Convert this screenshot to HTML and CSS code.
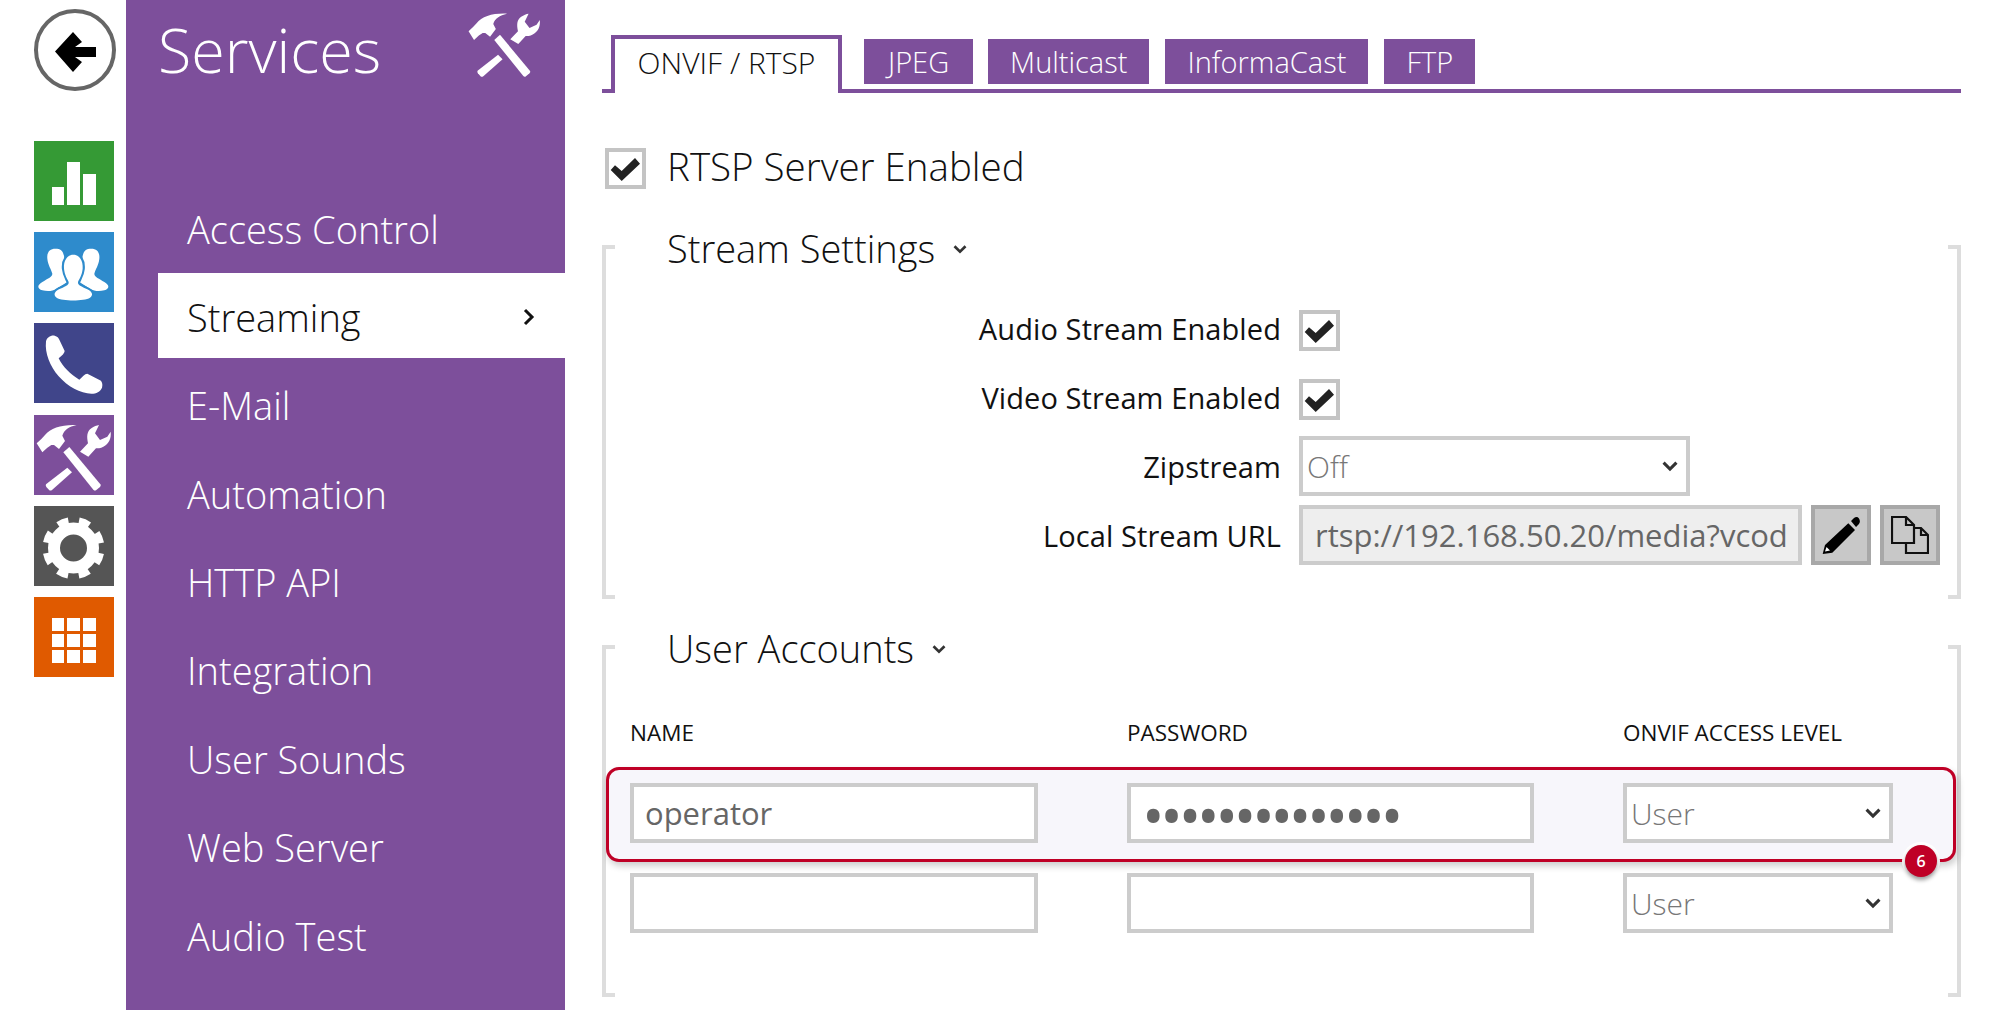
FILE: index.html
```html
<!DOCTYPE html>
<html lang="en">

<head>
    <meta charset="UTF-8">
    <title>Services - Streaming</title>
    <link rel="stylesheet" href="styles.css">
</head>

<body>
    <svg class="defs" width="0" height="0">
        <symbol id="tools" viewBox="0 0 240 240">
            <path d="M8 85 L22 72 L33 60 C50 38 85 28 128 30 C105 35 90 45 85 62 L93 78 L75 102 L60 90 L52 90 L40 98 L25 112 Z" />
            <path d="M88 112 L106 96 L199 208 Q202 212 198 216 L186 226 Q182 228 178 224 Z" />
            <path d="M100 158 L36 208 Q34 212 37 216 L46 226 Q50 228 54 225 L114 172 Z" />
            <path d="M138 110 L162 85 C158 65 158 50 172 40 C180 34 188 31 195 30 L183 55 L198 75 L220 65 L230 50 C232 70 226 85 208 95 C200 100 190 100 186 100 L163 125 Z" />
        </symbol>
    </svg>

    <nav class="rail">
        <div class="back">
            <svg viewBox="0 0 74 74" width="74" height="74">
                <path d="M17 38.5 L35 19 L44 29 L37 34 L58 34 L58 44 L37 44 L44 49 L35 59 Z" />
            </svg>
        </div>
        <div class="tile tile-green">
            <svg viewBox="0 0 80 80"><path d="M18 46h12v18H18z M33 21h13v43H33z M49 33h13v31H49z" /></svg>
        </div>
        <div class="tile tile-blue">
            <svg viewBox="0 0 240 240">
                <path d="M64 50 C48 50 38 60 40 80 C42 100 52 112 55 125 C55 135 40 140 25 150 C8 160 10 170 25 175 C40 178 55 178 68 170 L100 150 L92 100 C92 60 85 50 64 50 Z" />
                <path d="M172 50 C188 50 198 60 196 80 C194 100 184 112 181 125 C181 135 196 140 211 150 C228 160 226 170 211 175 C196 178 181 178 168 170 L136 150 L144 100 C144 60 151 50 172 50 Z" />
                <path class="person-front" d="M118 68 C100 68 88 85 90 110 C92 130 100 140 104 150 C106 160 90 165 75 172 C60 180 58 190 68 197 C85 208 150 208 168 197 C178 190 176 180 160 172 C146 165 130 160 132 150 C136 140 144 130 146 110 C148 85 136 68 118 68 Z" />
            </svg>
        </div>
        <div class="tile tile-navy">
            <svg viewBox="0 0 240 240">
                <path d="M36 55 C38 45 50 36 62 38 C70 40 74 44 76 50 L92 84 C92 90 84 98 74 106 C85 130 110 155 136 170 C145 162 152 152 160 152 L198 172 C206 176 206 188 204 194 C198 206 188 212 172 212 C140 212 100 190 74 160 C48 130 32 92 36 55 Z" />
            </svg>
        </div>
        <div class="tile tile-purple">
            <svg><use href="#tools" /></svg>
        </div>
        <div class="tile tile-gray">
            <svg viewBox="0 0 80 80">
                <circle class="gear-ring" cx="39.5" cy="42" r="19.5" />
                <circle class="gear-teeth" cx="39.5" cy="42" r="27.5" />
            </svg>
        </div>
        <div class="tile tile-orange">
            <svg viewBox="0 0 80 80">
                <path d="M18 21h12v13H18z M33 21h13v13H33z M49 21h13v13H49z M18 37h12v13H18z M33 37h13v13H33z M49 37h13v13H49z M18 53h12v13H18z M33 53h13v13H33z M49 53h13v13H49z" />
            </svg>
        </div>
    </nav>

    <aside class="sidebar">
        <div class="sidebar-head">
            <h1>Services</h1>
            <svg class="head-icon"><use href="#tools" /></svg>
        </div>
        <ul class="menu">
            <li>Access Control</li>
            <li class="active">Streaming
                <svg class="menu-arrow" viewBox="0 0 12 18" width="12" height="18"><path d="M2 2 L9 9 L2 16" /></svg>
            </li>
            <li>E-Mail</li>
            <li>Automation</li>
            <li>HTTP API</li>
            <li>Integration</li>
            <li>User Sounds</li>
            <li>Web Server</li>
            <li>Audio Test</li>
        </ul>
    </aside>

    <main class="content">
        <div class="tabs">
            <div class="tab active">ONVIF / RTSP</div>
            <div class="tab tab-jpeg">JPEG</div>
            <div class="tab">Multicast</div>
            <div class="tab">InformaCast</div>
            <div class="tab">FTP</div>
        </div>

        <div class="server-row">
            <span class="check">
                <svg viewBox="0 0 33 33"><path d="M1.7 18 L6 13.3 L12.7 19 L26 6 L31 11.7 L12.7 29 Z" /></svg>
            </span>
            <span class="server-label">RTSP Server Enabled</span>
        </div>

        <section class="group group-stream">
            <h2>Stream Settings
                <svg class="title-arrow" viewBox="0 0 14 10" width="16" height="11"><path d="M2 2 L7 7 L12 2" /></svg>
            </h2>
            <div class="fields">
                <div class="field field-check">
                    <label>Audio Stream Enabled</label>
                    <span class="check">
                        <svg viewBox="0 0 33 33"><path d="M1.7 18 L6 13.3 L12.7 19 L26 6 L31 11.7 L12.7 29 Z" /></svg>
                    </span>
                </div>
                <div class="field field-check">
                    <label>Video Stream Enabled</label>
                    <span class="check">
                        <svg viewBox="0 0 33 33"><path d="M1.7 18 L6 13.3 L12.7 19 L26 6 L31 11.7 L12.7 29 Z" /></svg>
                    </span>
                </div>
                <div class="field field-select">
                    <label>Zipstream</label>
                    <div class="select select-zip">
                        <span>Off</span>
                        <svg viewBox="0 0 14 10" width="18" height="13"><path d="M2 2 L7 7 L12 2" /></svg>
                    </div>
                </div>
                <div class="field field-url">
                    <label>Local Stream URL</label>
                    <div class="url-wrap">
                        <input class="text-input url-input" type="text" value="rtsp://192.168.50.20/media?vcodec=h264" disabled>
                        <button class="icon-btn">
                            <svg viewBox="0 0 38 38" width="38" height="38">
                                <path d="M0.7 38 L3 29 L26.3 7.3 L33 14 L10.3 36.7 Z M29 5 L32 2 Q35 0 37 2.5 Q39 6 36.5 8.5 L34 11 Z" />
                                <path class="pencil-tip" d="M3 35.5 L4.5 31 L8 34.5 Z" />
                            </svg>
                        </button>
                        <button class="icon-btn">
                            <svg viewBox="0 0 38 38" width="38" height="38">
                                <path class="copy-page" d="M15 12 H30 L37 19 V37 H15 Z M30 12 V19 H37" />
                                <path class="copy-page copy-front" d="M1 1 H15 L23 9 V27 H1 Z M15 1 V9 H23" />
                            </svg>
                        </button>
                    </div>
                </div>
            </div>
        </section>

        <section class="group group-users">
            <h2>User Accounts
                <svg class="title-arrow" viewBox="0 0 14 10" width="16" height="11"><path d="M2 2 L7 7 L12 2" /></svg>
            </h2>
            <div class="account-row account-head">
                <span>NAME</span>
                <span>PASSWORD</span>
                <span>ONVIF ACCESS LEVEL</span>
            </div>
            <div class="account-row account-marked">
                <input class="text-input" type="text" value="operator">
                <input class="text-input password" type="password" value="12345678901234">
                <div class="select">
                    <span>User</span>
                    <svg viewBox="0 0 14 10" width="18" height="13"><path d="M2 2 L7 7 L12 2" /></svg>
                </div>
                <span class="badge">6</span>
            </div>
            <div class="account-row account-empty">
                <input class="text-input" type="text">
                <input class="text-input" type="password">
                <div class="select">
                    <span>User</span>
                    <svg viewBox="0 0 14 10" width="18" height="13"><path d="M2 2 L7 7 L12 2" /></svg>
                </div>
            </div>
        </section>
    </main>
</body>

</html>
```

FILE: styles.css
```css
* {
    box-sizing: border-box;
}

body {
    margin: 0;
    height: 1010px;
    display: flex;
    overflow: hidden;
    background: white;
    color: #111;
    font-family: "Open Sans", sans-serif;
}

.defs {
    position: absolute;
}

/* left icon rail */
.rail {
    width: 126px;
    flex: none;
    padding: 9px 0 0 34px;
}

.back {
    width: 82px;
    height: 82px;
    margin-bottom: 50px;
    border: 4px solid #666;
    border-radius: 50%;
    display: flex;
}

.tile {
    width: 80px;
    height: 80px;
    margin-bottom: 11.2px;
}

.tile svg {
    display: block;
    width: 80px;
    height: 80px;
    fill: white;
}

.tile-green {
    background: #359a35;
}

.tile-blue {
    background: #2e8bcc;
}

.tile-navy {
    background: #40458a;
}

.tile-purple {
    background: #7d4f9b;
}

.tile-gray {
    background: #555;
}

.tile-orange {
    background: #e05a00;
}

.person-front {
    stroke: #2e8bcc;
    stroke-width: 13;
    paint-order: stroke;
}

.gear-ring {
    fill: none;
    stroke: white;
    stroke-width: 12;
}

.gear-teeth {
    fill: none;
    stroke: white;
    stroke-width: 7;
    stroke-dasharray: 11 10.6;
    stroke-dashoffset: -5.3;
}

/* purple service menu */
.sidebar {
    width: 439px;
    flex: none;
    background: #7d4f9b;
    color: white;
    padding-left: 32px;
}

.sidebar-head {
    height: 185px;
    display: flex;
    justify-content: space-between;
    align-items: flex-start;
}

.sidebar-head h1 {
    margin: 10px 0 0;
    font-size: 61px;
    font-weight: 300;
    line-height: 80px;
}

.head-icon {
    width: 77px;
    height: 77px;
    margin: 4px 22px 0 0;
    fill: white;
}

.menu {
    margin: 0;
    padding: 0;
    list-style: none;
}

.menu li {
    height: 85px;
    margin-bottom: 3.4px;
    padding: 2px 0 0 29px;
    display: flex;
    align-items: center;
    font-size: 38px;
    font-weight: 300;
}

.menu li.active {
    background: white;
    color: #111;
}

.menu-arrow {
    margin-left: auto;
    margin-right: 30px;
    fill: none;
    stroke: #111;
    stroke-width: 3;
}

/* main form */
.content {
    flex: 1;
    padding: 35px 39px 0 37px;
}

.tabs {
    height: 58px;
    display: flex;
    align-items: flex-end;
    border-bottom: 4px solid #7d4f9b;
}

.tab {
    height: 45px;
    margin: 0 16px 5px 0;
    padding: 0 22px;
    display: flex;
    align-items: center;
    background: #7d4f9b;
    color: white;
    font-size: 29px;
    font-weight: 300;
}

.tab.active {
    width: 231px;
    height: 58px;
    margin: 0 22px -4px 9px;
    padding: 0 0 8px;
    justify-content: center;
    background: white;
    color: #111;
    border: solid #7d4f9b;
    border-width: 4px 4px 0;
    font-size: 30px;
}

.tab-jpeg {
    margin-right: 15px;
    padding: 0 24px;
}

.server-row {
    height: 41px;
    margin: 55px 0 0 3px;
    display: flex;
    align-items: center;
    gap: 21px;
    font-size: 38.5px;
    font-weight: 300;
}

.server-label {
    margin-bottom: 5px;
}

.check {
    width: 41px;
    height: 41px;
    flex: none;
    display: block;
    border: 4px solid #c4c4c4;
    background: white;
}

.check svg {
    display: block;
    fill: #222;
}

.group {
    display: flow-root;
    padding-left: 61px;
    border: solid #ddd;
    border-width: 0 4px;
    background:
        linear-gradient(#ddd, #ddd) 0 0 / 9px 4px no-repeat,
        linear-gradient(#ddd, #ddd) 100% 0 / 9px 4px no-repeat,
        linear-gradient(#ddd, #ddd) 0 100% / 9px 4px no-repeat,
        linear-gradient(#ddd, #ddd) 100% 100% / 9px 4px no-repeat;
}

.group-stream {
    margin-top: 56px;
    padding-bottom: 34px;
}

.group-users {
    margin-top: 46px;
    padding-left: 0;
    padding-bottom: 64px;
}

.group h2 {
    height: 50px;
    margin: -20px 0 0;
    padding-bottom: 5px;
    display: flex;
    align-items: center;
    font-size: 38px;
    font-weight: 300;
}

.group-users h2 {
    padding-left: 61px;
}

.title-arrow {
    margin: 4px 0 0 17px;
}

.title-arrow path,
.select path {
    fill: none;
    stroke: #333;
    stroke-width: 2.4;
}

.fields {
    margin: 35px 0 0 -61px;
}

.field {
    display: grid;
    grid-template-columns: 675px 1fr;
    column-gap: 18px;
    align-items: center;
}

.field label {
    text-align: right;
    font-size: 29px;
    letter-spacing: 0.1px;
}

.field-check {
    grid-template-rows: 41px;
}

.field-check label {
    margin-bottom: 5px;
}

.field-check+.field-check {
    margin-top: 28px;
}

.field-select {
    margin-top: 16px;
}

.field-url {
    margin-top: 9px;
}

.select {
    height: 60px;
    padding: 0 7px 0 4px;
    display: flex;
    align-items: center;
    justify-content: space-between;
    border: 4px solid #ccc;
    background: white;
    color: #777;
    font-size: 30px;
    font-weight: 300;
}

.select-zip {
    width: 391px;
}

.text-input {
    width: 100%;
    height: 60px;
    padding: 0 11px;
    border: 4px solid #ccc;
    border-radius: 0;
    background: white;
    color: #666;
    font-family: "Open Sans", sans-serif;
    font-size: 31px;
    outline: none;
}

.url-wrap {
    display: flex;
    gap: 9px;
}

.url-input {
    width: 503px;
    padding: 0 12px;
    background: #eee;
    font-size: 31px;
}

.icon-btn {
    width: 60px;
    height: 60px;
    padding: 0;
    display: flex;
    align-items: center;
    justify-content: center;
    border: 4px solid #a8a8a8;
    background: #c8c8c8;
}

.pencil-tip {
    fill: white;
}

.copy-page {
    fill: none;
    stroke: #111;
    stroke-width: 2.2;
}

.copy-front {
    fill: #c8c8c8;
}

.account-row {
    display: grid;
    grid-template-columns: 408px 407px 270px;
    column-gap: 89px;
    padding-left: 24px;
    position: relative;
}

.account-head {
    height: 30px;
    margin-top: 42px;
    align-items: center;
    font-size: 22.5px;
}

.account-marked {
    height: 95px;
    margin: 20px 1px 0 0;
    padding: 13px 0 0 21px;
    align-content: start;
    border: 3px solid #bf0026;
    border-radius: 13px;
    background: #f7f6fb;
    box-shadow: 2px 4px 7px rgba(0, 0, 0, 0.2);
}

.account-empty {
    margin-top: 11px;
}

.password {
    padding-top: 3px;
    font-size: 60px;
    letter-spacing: -4.2px;
}

.badge {
    position: absolute;
    right: 13px;
    bottom: -21px;
    width: 32px;
    height: 32px;
    margin: 3px;
    border-radius: 50%;
    display: flex;
    align-items: center;
    justify-content: center;
    background: #bf0026;
    color: white;
    font-size: 16px;
    font-weight: 600;
    box-shadow: 0 3px 4px rgba(0, 0, 0, 0.4), 0 0 0 3px white;
}
```
